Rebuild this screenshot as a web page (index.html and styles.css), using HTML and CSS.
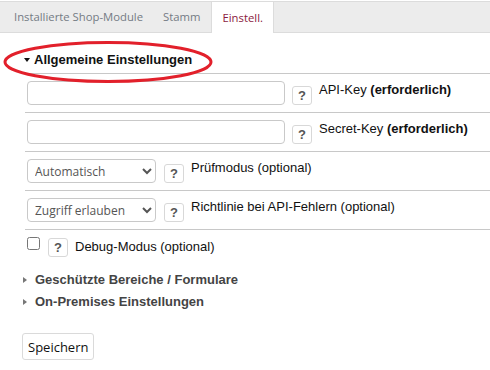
FILE: index.html
```html
<!DOCTYPE html>
<html lang="de">
<head>
<meta charset="utf-8">
<title>Einstellungen</title>
<link rel="stylesheet" href="styles.css">
</head>
<body>
<div class="tabs">
  <div class="tab">Installierte Shop-Module</div>
  <div class="tab">Stamm</div>
  <div class="tab active">Einstell.</div>
</div>

<div class="content">
  <div class="group open">
    <div class="group-head">
      <span class="tri-down"></span>
      <span class="group-title">Allgemeine Einstellungen</span>
      <svg class="mark" width="214" height="46" viewBox="0 0 214 46"><ellipse cx="107" cy="22" rx="103" ry="19.5" fill="none" stroke="#e2202b" stroke-width="3"/></svg>
    </div>
    <div class="rows">
      <div class="row">
        <input class="text" type="text">
        <span class="help">?</span>
        <span class="label">API-Key <b>(erforderlich)</b></span>
      </div>
      <div class="row">
        <input class="text" type="text">
        <span class="help">?</span>
        <span class="label">Secret-Key <b>(erforderlich)</b></span>
      </div>
      <div class="row">
        <select class="sel"><option>Automatisch</option></select>
        <span class="help">?</span>
        <span class="label">Prüfmodus (optional)</span>
      </div>
      <div class="row">
        <select class="sel"><option>Zugriff erlauben</option></select>
        <span class="help">?</span>
        <span class="label">Richtlinie bei API-Fehlern (optional)</span>
      </div>
      <div class="row check-row">
        <input class="cb" type="checkbox">
        <span class="help">?</span>
        <span class="label">Debug-Modus (optional)</span>
      </div>
    </div>
  </div>

  <div class="group closed">
    <span class="tri-right"></span>
    <span class="group-title">Geschützte Bereiche / Formulare</span>
  </div>
  <div class="group closed">
    <span class="tri-right"></span>
    <span class="group-title">On-Premises Einstellungen</span>
  </div>

  <button class="save" type="button">Speichern</button>
</div>
</body>
</html>
```

FILE: styles.css
```css
* { box-sizing: border-box; }
html, body { margin: 0; padding: 0; background: #fff; }
body {
  font-family: "Liberation Sans", Arial, sans-serif;
  font-size: 13px;
  color: #111;
  width: 490px;
  height: 370px;
  overflow: hidden;
}

.tabs {
  margin-top: 1px;
  height: 32px;
  display: flex;
  padding-left: 4px;
  background: #ececec;
  border-top: 1px solid #dcdcdc;
  border-bottom: 1px solid #dcdcdc;
  font-family: "Open Sans", sans-serif;
  font-size: 11.3px;
}
.tab {
  padding: 0 10px;
  line-height: 30px;
  color: #747b84;
}
.tab.active {
  background: #fff;
  color: #8a1a40;
  border-left: 1px solid #dcdcdc;
  border-right: 1px solid #dcdcdc;
  height: 32px;
  margin-top: -1px;
  border-top: 1px solid #dcdcdc;
  line-height: 31px;
  margin-left: 1px;
}

.content { padding: 0; }

.group-head {
  position: relative;
  display: flex;
  align-items: center;
  height: 27px;
  margin-top: 13px;
  padding-left: 24px;
}
.tri-down {
  width: 0; height: 0;
  border-left: 3.5px solid transparent;
  border-right: 3.5px solid transparent;
  border-top: 4px solid #111;
  margin-right: 4px;
  margin-top: 1px;
}
.group-title { font-weight: bold; }
.mark {
  position: absolute;
  left: 1px;
  top: -6px;
}

.rows { margin-left: 25px; }
.row {
  display: flex;
  align-items: flex-start;
  border-top: 1px solid #c8c8c8;
  padding: 7px 0 7px 2px;
}
.text {
  width: 258px;
  height: 24px;
  border: 1px solid #c9c9c9;
  border-radius: 4px;
  margin: 0;
  padding: 0 6px;
  font: inherit;
  background: #fff;
}
.sel {
  width: 129px;
  height: 24px;
  border: 1px solid #c9c9c9;
  border-radius: 4px;
  margin: 0;
  padding: 0 3px;
  font-family: "Open Sans", sans-serif;
  font-size: 12px;
  color: #555;
  background: #fff;
}
.help {
  width: 20px;
  height: 19px;
  margin: 5px 7px 0 7px;
  border: 1px solid #d8d8d8;
  border-radius: 3px;
  color: #555;
  font-weight: bold;
  font-size: 13px;
  line-height: 18px;
  text-align: center;
  background: #fff;
}
.sel + .help { margin-left: 8px; margin-top: 5px; }
.label { margin-top: 1px; }

.check-row { padding-top: 7px; height: 30px; }
.cb {
  margin: 0;
  width: 13px;
  height: 13px;
}
.check-row .help { margin: 1px 7px 0 8px; }
.check-row .label { margin-top: 2px; }

.group.closed {
  display: flex;
  align-items: center;
  padding-left: 23px;
  height: 22px;
  color: #444;
}
.group.open + .group.closed { margin-top: 9px; }
.tri-right {
  width: 0; height: 0;
  border-top: 3.5px solid transparent;
  border-bottom: 3.5px solid transparent;
  border-left: 4px solid #777;
  margin-right: 8px;
  margin-top: 1px;
}

.save {
  display: block;
  margin: 21px 0 0 22px;
  height: 27px;
  padding: 0 5px;
  background: #fff;
  border: 1px solid #dadada;
  border-radius: 3px;
  font-family: "Open Sans", sans-serif;
  font-size: 13px;
  color: #111;
}
```
